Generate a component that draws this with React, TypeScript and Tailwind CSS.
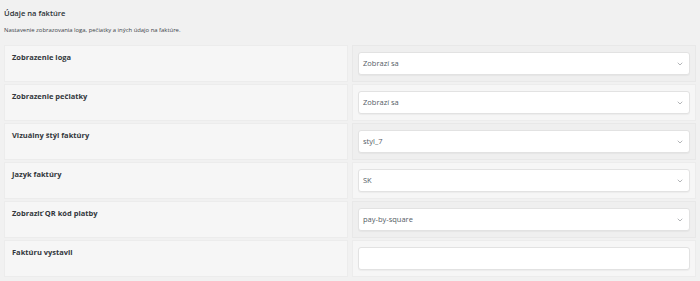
import { ChevronDown } from "lucide-react";

type Row = { label: string; value?: string; kind: "select" | "input" };

const rows: Row[] = [
  { label: "Zobrazenie loga", value: "Zobrazí sa", kind: "select" },
  { label: "Zobrazenie pečiatky", value: "Zobrazí sa", kind: "select" },
  { label: "Vizuálny štýl faktúry", value: "styl_7", kind: "select" },
  { label: "Jazyk faktúry", value: "SK", kind: "select" },
  { label: "Zobraziť QR kód platby", value: "pay-by-square", kind: "select" },
  { label: "Faktúru vystavil", kind: "input" },
];

const App = () => {
  return (
    <div
      className="w-[700px] h-[281px] bg-[#f1f1f1] overflow-hidden text-[#23282d] leading-none"
      style={{ fontFamily: '"Open Sans", "Noto Sans", sans-serif' }}
    >
      {/* Hlavička sekcie */}
      <div className="px-1 pt-[7px]">
        <h2 className="text-[7.6px] leading-[12px] font-semibold text-[#2c3338]">Údaje na faktúre</h2>
        <p className="mt-[7px] text-[5.9px] leading-[8px] text-[#3c434a]">
          Nastavenie zobrazovania loga, pečiatky a iných údajo na faktúre.
        </p>
      </div>

      {/* Tabuľka nastavení */}
      <div className="mt-[11px] px-1 flex flex-col gap-[2px]">
        {rows.map((row, i) => (
          <div key={row.label} className="grid grid-cols-2 gap-[4px] h-[37px]">
            <div className="bg-[#f6f6f6] border border-[#ececec] px-[7px] pt-[5px] text-[7.5px] leading-[12px] font-bold text-[#32373c]">
              {row.label}
            </div>
            <div
              className={
                i % 2 === 0
                  ? "bg-[#efefef] border border-[#e8e8e8] px-[5px] pt-[6px]"
                  : "bg-[#f6f6f6] border border-[#ececec] px-[5px] pt-[6px]"
              }
            >
              {row.kind === "select" ? (
                <div className="h-[23px] bg-white border border-[#e2e2e2] rounded-[3px] shadow-[0_1px_1px_rgba(0,0,0,0.04)] flex items-center justify-between pl-[4px] pr-[5px]">
                  <span className="text-[7.5px] text-[#555d66]">{row.value}</span>
                  <ChevronDown className="w-[8px] h-[8px] text-[#8c8f94]" strokeWidth={2} />
                </div>
              ) : (
                <div className="h-[23px] bg-white border border-[#e2e2e2] rounded-[3px] shadow-[0_1px_1px_rgba(0,0,0,0.04)]" />
              )}
            </div>
          </div>
        ))}
      </div>
    </div>
  );
};

export default App;
